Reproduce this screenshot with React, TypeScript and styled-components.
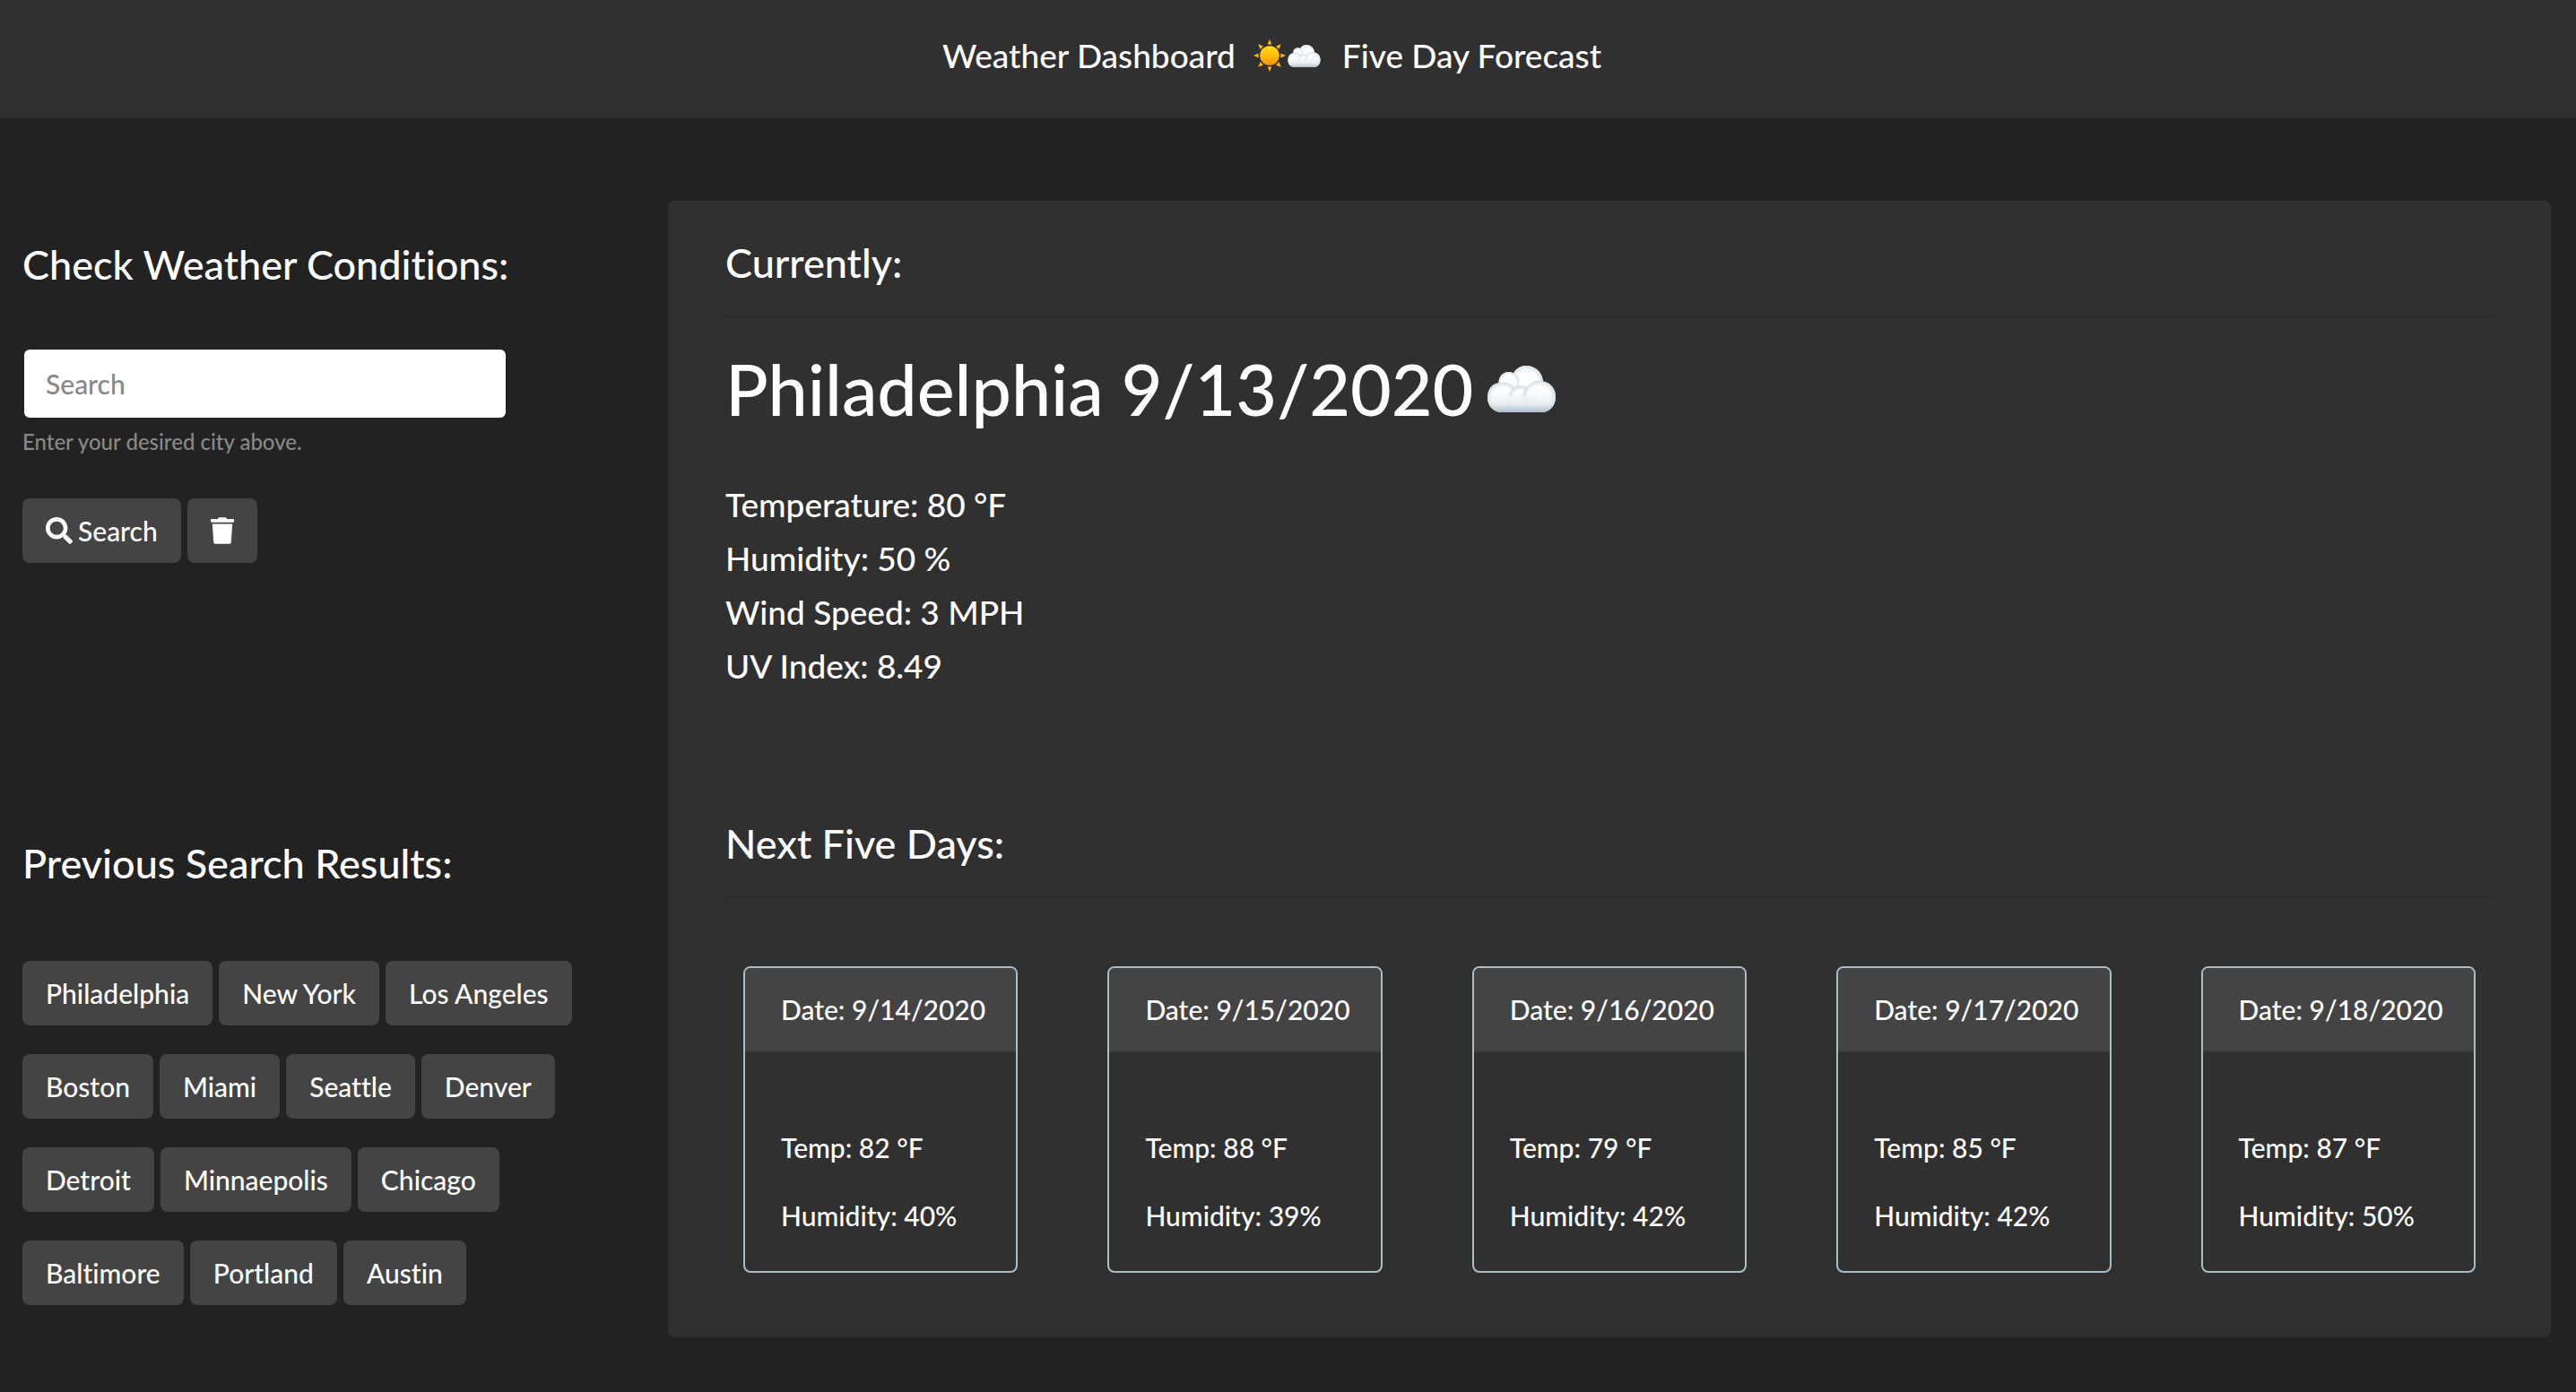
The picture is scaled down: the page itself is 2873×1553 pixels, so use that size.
import React, { useId, useState } from "react";
import styled, { createGlobalStyle } from "styled-components";
import { FaSearch, FaTrash } from "react-icons/fa";

const GlobalStyle = createGlobalStyle`
  *, *::before, *::after { box-sizing: border-box; }
  body {
    margin: 0;
    background: #222;
    color: #fff;
    font-family: Lato, "Liberation Sans", sans-serif;
    font-size: 30px;
    font-weight: 500;
    font-variant-ligatures: none;
    line-height: 44px;
    -webkit-font-smoothing: antialiased;
  }
`;

const Header = styled.header`
  display: flex;
  justify-content: center;
  padding: 34px 36px 42px 0;
  background: #303030;
`;

const Brand = styled.h1`
  display: flex;
  align-items: center;
  margin: 0;
  font-size: 37px;
  font-weight: 500;
  line-height: 56px;
`;

const BrandIcons = styled.span`
  display: flex;
  align-items: center;
  gap: 2px;
  margin: 0 24px 0 20px;
`;

const Page = styled.main`
  display: grid;
  grid-template-columns: 11fr 35fr;
  gap: 60px;
  padding: 92px 28px 60px 25px;
`;

const Sidebar = styled.aside`
  padding-top: 44px;
`;

const SectionTitle = styled.h2`
  margin: 0;
  font-size: 45px;
  font-weight: 500;
  line-height: 54px;
`;

const Divider = styled.hr<{ $faint?: boolean }>`
  height: 2px;
  margin: 32px 0;
  border: 0;
  background: ${(p) => (p.$faint ? "#202020" : "#2b2b2b")};
`;

const SearchForm = styled.form`
  margin-bottom: 308px;
`;

const SearchInput = styled.input`
  display: block;
  width: 82%;
  height: 80px;
  padding: 0 24px;
  border: 2px solid #222;
  border-radius: 8px;
  background: #fff;
  color: #444;
  font: inherit;

  &::placeholder {
    color: #888;
    opacity: 1;
  }
`;

const HelpLabel = styled.label`
  display: block;
  margin: 7px 0 45px;
  color: #888;
  font-size: 24px;
  line-height: 36px;
`;

const ButtonRow = styled.div`
  display: flex;
  gap: 7px;
`;

const Button = styled.button`
  display: inline-flex;
  align-items: center;
  gap: 6px;
  padding: 14px 26px;
  border: 0;
  border-radius: 8px;
  background: #444;
  color: #fff;
  font: inherit;
  font-variant-ligatures: inherit;
  cursor: pointer;
`;

const TrashIcon = styled(FaTrash)`
  width: 26px;
  height: 30px;
`;

const History = styled.div`
  display: grid;
  gap: 32px;
  padding-top: 16px;
`;

const Panel = styled.section`
  padding: 42px 64px 72px;
  border-radius: 8px;
  background: #303030;
`;

const CityTitle = styled.h3`
  display: flex;
  align-items: center;
  gap: 16px;
  margin: 0 0 51px;
  font-size: 79px;
  font-weight: 500;
  line-height: 96px;
`;

const Conditions = styled.ul`
  margin: 0 0 141px;
  padding: 0;
  list-style: none;
  font-size: 37px;
  line-height: 60px;
`;

const Forecast = styled.div`
  display: grid;
  grid-template-columns: repeat(5, 1fr);
  gap: 100px;
  padding: 44px 20px 0;
`;

const Card = styled.article`
  overflow: hidden;
  border: 2px solid #adbdc8;
  border-radius: 8px;
`;

const CardHeader = styled.header`
  padding: 24px 40px;
  border-bottom: 2px solid #3c3c3c;
  background: #444;
  white-space: nowrap;
`;

const CardBody = styled.div`
  display: grid;
  gap: 32px;
  padding: 84px 40px 40px;
`;

const CardText = styled.p`
  margin: 0;
`;

const Drawing = styled.svg`
  display: block;
  flex: none;
`;

function Sun({ size }: { size: number }) {
  const id = useId();
  return (
    <Drawing width={size} height={size} viewBox="0 0 36 36" aria-hidden="true">
      <defs>
        <linearGradient id={id} x1="0" y1="0" x2="0" y2="1">
          <stop offset="0" stopColor="#ffd91e" />
          <stop offset="0.55" stopColor="#ffb90a" />
          <stop offset="1" stopColor="#fd8f05" />
        </linearGradient>
      </defs>
      {[0, 45, 90, 135, 180, 225, 270, 315].map((angle) => (
        <path key={angle} d="M18 0L20.4 5.6H15.6Z" fill="#fdb515" transform={`rotate(${angle} 18 18)`} />
      ))}
      <circle cx="18" cy="18" r="10.8" fill={`url(#${id})`} />
    </Drawing>
  );
}

function Cloud({ width }: { width: number }) {
  const id = useId();
  const body = `${id}body`;
  const puff = `${id}puff`;
  const clip = `${id}clip`;
  return (
    <Drawing width={width} height={Math.round((width * 52) / 76)} viewBox="0 0 76 52" aria-hidden="true">
      <defs>
        <linearGradient id={body} x1="0" y1="0" x2="0" y2="1">
          <stop offset="0" stopColor="#e4ebef" stopOpacity="0" />
          <stop offset="0.6" stopColor="#d5dfe6" stopOpacity="0.5" />
          <stop offset="1" stopColor="#a9bac7" />
        </linearGradient>
        <radialGradient id={puff} cx="0.5" cy="0.5" r="0.5">
          <stop offset="0" stopColor="#fff" />
          <stop offset="0.7" stopColor="#fafcfd" />
          <stop offset="1" stopColor="#d3dde4" />
        </radialGradient>
        <clipPath id={clip}>
          <path d="M16 52C7 52 0 45 0 35.500C0 26.500 5 20 12.500 19C12.500 12 17 7 23.500 7C25.500 7 27.500 7.500 29 8.500C32 3 37 0 43 0C53 0 61 7 62 17.500C70 18.500 76 25.500 76 34.500C76 44.500 69.500 52 60 52Z" />
        </clipPath>
      </defs>
      <g clipPath={`url(#${clip})`}>
        <rect width="76" height="52" fill="#f4f7f9" />
        <circle cx="43" cy="19" r="19.500" fill={`url(#${puff})`} />
        <circle cx="23.500" cy="18" r="11.500" fill={`url(#${puff})`} />
        <circle cx="17" cy="36" r="17.500" fill={`url(#${puff})`} />
        <ellipse cx="37" cy="39" rx="14" ry="17" fill={`url(#${puff})`} />
        <circle cx="58" cy="35" r="18.500" fill={`url(#${puff})`} />
        <rect x="14" y="34" width="46" height="18" rx="8" fill="#f7fafb" opacity="0.8" />
        <rect y="28" width="76" height="24" fill={`url(#${body})`} />
      </g>
    </Drawing>
  );
}

const previousCities = [
  ["Philadelphia", "New York", "Los Angeles"],
  ["Boston", "Miami", "Seattle", "Denver"],
  ["Detroit", "Minnaepolis", "Chicago"],
  ["Baltimore", "Portland", "Austin"],
];

const conditions = ["Temperature: 80 °F", "Humidity: 50 %", "Wind Speed: 3 MPH", "UV Index: 8.49"];

const forecast = [
  { date: "9/14/2020", temp: 82, humidity: 40 },
  { date: "9/15/2020", temp: 88, humidity: 39 },
  { date: "9/16/2020", temp: 79, humidity: 42 },
  { date: "9/17/2020", temp: 85, humidity: 42 },
  { date: "9/18/2020", temp: 87, humidity: 50 },
];

export default function App() {
  const [query, setQuery] = useState("");

  return (
    <>
      <GlobalStyle />
      <Header>
        <Brand>
          <span>Weather Dashboard</span>
          <BrandIcons>
            <Sun size={36} />
            <Cloud width={37} />
          </BrandIcons>
          <span>Five Day Forecast</span>
        </Brand>
      </Header>
      <Page>
        <Sidebar>
          <SectionTitle>Check Weather Conditions:</SectionTitle>
          <Divider $faint />
          <SearchForm onSubmit={(event) => event.preventDefault()}>
            <SearchInput
              id="city"
              type="text"
              placeholder="Search"
              value={query}
              onChange={(event) => setQuery(event.target.value)}
            />
            <HelpLabel htmlFor="city">Enter your desired city above.</HelpLabel>
            <ButtonRow>
              <Button type="submit">
                <FaSearch aria-hidden="true" />
                Search
              </Button>
              <Button type="button" aria-label="Clear" onClick={() => setQuery("")}>
                <TrashIcon aria-hidden="true" />
              </Button>
            </ButtonRow>
          </SearchForm>
          <SectionTitle>Previous Search Results:</SectionTitle>
          <Divider $faint />
          <History>
            {previousCities.map((row) => (
              <ButtonRow key={row[0]}>
                {row.map((city) => (
                  <Button key={city} type="button">
                    {city}
                  </Button>
                ))}
              </ButtonRow>
            ))}
          </History>
        </Sidebar>
        <Panel>
          <SectionTitle>Currently:</SectionTitle>
          <Divider />
          <CityTitle>
            <span>Philadelphia 9/13/2020</span>
            <Cloud width={76} />
          </CityTitle>
          <Conditions>
            {conditions.map((line) => (
              <li key={line}>{line}</li>
            ))}
          </Conditions>
          <SectionTitle>Next Five Days:</SectionTitle>
          <Divider />
          <Forecast>
            {forecast.map((day) => (
              <Card key={day.date}>
                <CardHeader>Date: {day.date}</CardHeader>
                <CardBody>
                  <CardText>Temp: {day.temp} °F</CardText>
                  <CardText>Humidity: {day.humidity}%</CardText>
                </CardBody>
              </Card>
            ))}
          </Forecast>
        </Panel>
      </Page>
    </>
  );
}
